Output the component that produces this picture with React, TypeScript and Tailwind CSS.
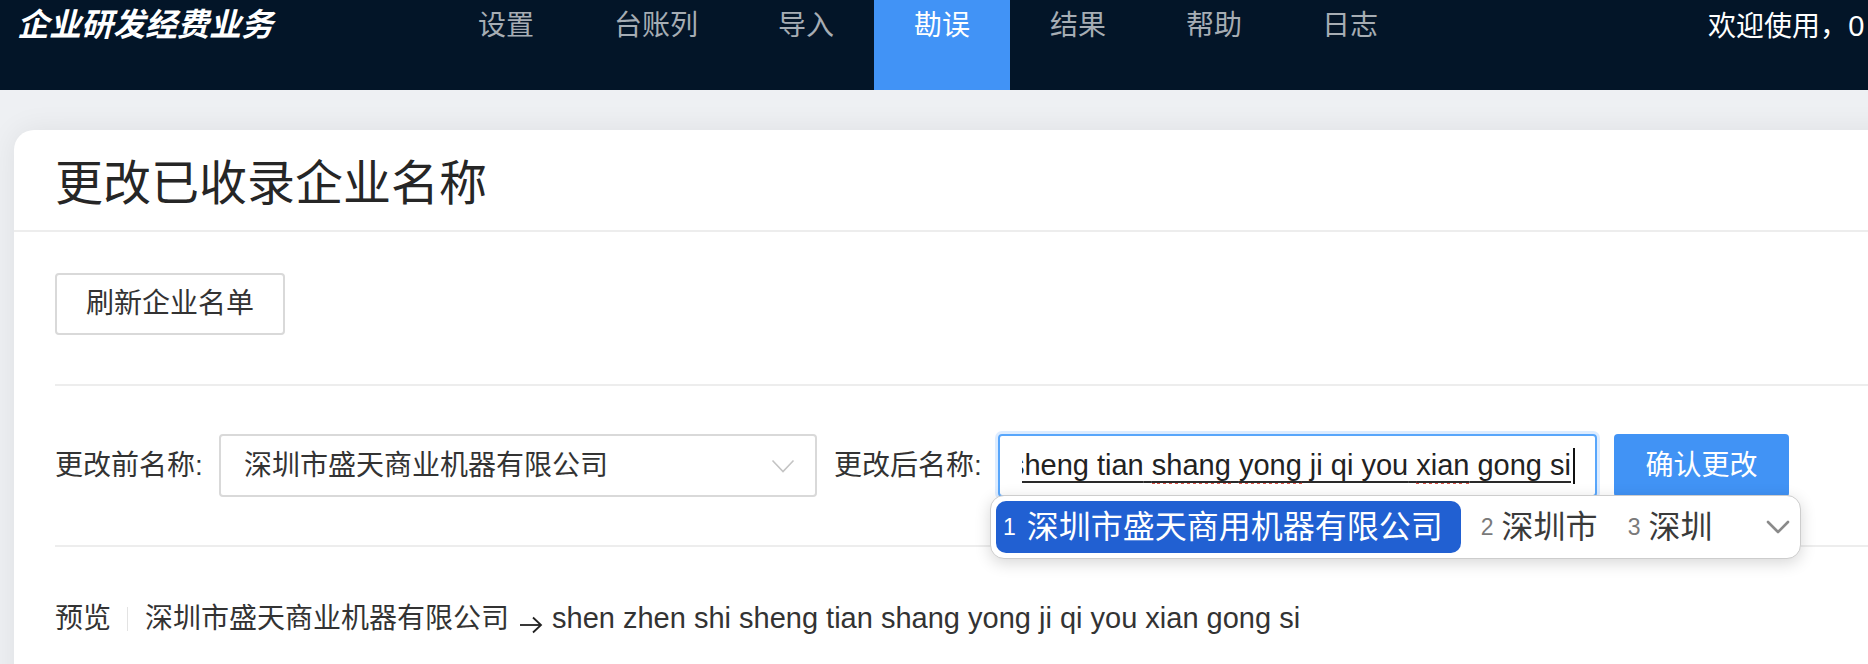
import React from "react";

const menu = ["设置", "台账列", "导入", "勘误", "结果", "帮助", "日志"];

export default function App() {
  return (
    <div className="w-[1868px] h-[664px] overflow-hidden bg-[#eef0f3] text-[#262626] font-['Liberation_Sans','Noto_Sans_CJK_SC',sans-serif]">
      <header className="h-[90px] bg-[#031528] flex items-start">
        <div className="w-[438px] shrink-0 pl-[17px] leading-[50px] text-[32px] font-bold italic text-white whitespace-nowrap">
          企业研发经费业务
        </div>
        <nav className="flex shrink-0">
          {menu.map((m) => (
            <div
              key={m}
              className={
                m === "勘误"
                  ? "h-[90px] px-10 text-[28px] leading-[52px] bg-[#4193f6] text-white whitespace-nowrap"
                  : "h-[90px] px-10 text-[28px] leading-[52px] text-[#a6adb4] whitespace-nowrap"
              }
            >
              {m}
            </div>
          ))}
        </nav>
        <div className="ml-[290px] shrink-0 whitespace-nowrap text-white text-[28px] leading-[52px]">
          欢迎使用，<span className="text-[29px]">0</span>
        </div>
      </header>

      <main className="pt-[40px] pl-[14px]">
        <div className="w-[1900px] h-[600px] bg-white rounded-tl-[20px] shadow-[0_0_30px_rgba(0,0,0,0.07)]">
          <div className="h-[102px] pl-[41px] pt-[8px] border-b-2 border-[#ededed] flex items-center text-[48px] text-[#262626]">
            更改已收录企业名称
          </div>

          <div className="px-[41px]">
            <div className="mt-[41px]">
              <button className="w-[230px] h-[62px] border-2 border-[#d9d9d9] rounded-[4px] bg-white text-[28px] text-[#333] flex items-center justify-center">
                刷新企业名单
              </button>
            </div>

            <div className="mt-[49px] h-[2px] bg-[#ededed]" />

            <div className="mt-[48px] h-[63px] flex items-center text-[28px] text-[#333]">
              <div className="w-[164px] shrink-0 whitespace-nowrap">更改前名称:</div>
              <div className="w-[598px] h-[63px] shrink-0 border-2 border-[#d9d9d9] rounded-[4px] flex items-center justify-between pl-[23px] pr-[20px]">
                <span className="whitespace-nowrap text-[#333]">深圳市盛天商业机器有限公司</span>
                <svg width="24" height="14" viewBox="0 0 24 14" fill="none">
                  <polyline points="1.5,1.5 12,12.5 22.5,1.5" stroke="#c4c4c4" strokeWidth="1.6" />
                </svg>
              </div>
              <div className="w-[181px] shrink-0 pl-[17px] whitespace-nowrap">更改后名称:</div>
              <div className="relative w-[599px] h-[63px] shrink-0">
                <div className="w-full h-full border-2 border-[#58a6fb] rounded-[4px] shadow-[0_0_0_3px_rgba(64,150,255,0.18)] flex items-center pl-[22px] pr-[20px]">
                  <div className="flex-1 min-w-0 h-[48px] overflow-hidden flex items-center justify-end">
                    <span className="shrink-0 whitespace-nowrap text-[29px] text-[#222] underline decoration-2 decoration-[#2a2a2a] underline-offset-[6px]">
                      sheng tian{" "}
                      <span className="border-b-[3px] border-dotted border-[#e0554a]">shang</span>{" "}
                      <span className="border-b-[3px] border-dotted border-[#e0554a]">yong</span> ji qi you{" "}
                      <span className="border-b-[3px] border-dotted border-[#e0554a]">xian</span> gong si
                    </span>
                    <span className="w-[2px] h-[36px] bg-[#111] ml-[2px] shrink-0" />
                  </div>
                </div>

                <div className="absolute left-[-8px] top-[61px] z-10 w-[811px] h-[64px] rounded-[14px] bg-white border border-[#cdcdcd] shadow-[0_4px_16px_rgba(0,0,0,0.16)] flex items-center px-[5px]">
                  <div className="h-[52px] rounded-[10px] bg-[#2160d2] flex items-center pl-[7px] pr-[18px] text-white">
                    <span className="text-[23px] mr-[11px]">1</span>
                    <span className="text-[32px] whitespace-nowrap">深圳市盛天商用机器有限公司</span>
                  </div>
                  <span className="ml-[20px] text-[23px] text-[#7a7a7a]">2</span>
                  <span className="ml-[8px] text-[32px] text-[#3a3a3a] whitespace-nowrap">深圳市</span>
                  <span className="ml-[30px] text-[23px] text-[#7a7a7a]">3</span>
                  <span className="ml-[8px] text-[32px] text-[#3a3a3a] whitespace-nowrap">深圳</span>
                  <svg className="ml-[54px]" width="24" height="14" viewBox="0 0 24 14" fill="none">
                    <polyline points="2,2 12,12 22,2" stroke="#8a8a8a" strokeWidth="2.6" strokeLinecap="round" strokeLinejoin="round" />
                  </svg>
                </div>
              </div>
              <button className="ml-[17px] w-[175px] h-[63px] shrink-0 rounded-[4px] bg-[#4193f5] text-white text-[28px] flex items-center justify-center">
                确认更改
              </button>
            </div>

            <div className="mt-[48px] h-[2px] bg-[#ededed]" />

            <div className="mt-[52px] h-[40px] flex items-center text-[28px] text-[#333]">
              <span className="whitespace-nowrap">预览</span>
              <span className="ml-[16px] mr-[17px] w-px h-[24px] bg-[#e3e3e3]" />
              <span className="whitespace-nowrap">深圳市盛天商业机器有限公司</span>
              <svg className="ml-[10px] mr-[9px] mt-[12px]" width="24" height="18" viewBox="0 0 24 18" fill="none">
                <line x1="1" y1="9" x2="22" y2="9" stroke="#222" strokeWidth="1.8" />
                <polyline points="14,1.5 22,9 14,16.5" stroke="#222" strokeWidth="1.8" fill="none" />
              </svg>
              <span className="whitespace-nowrap text-[29px]">shen zhen shi sheng tian shang yong ji qi you xian gong si</span>
            </div>
          </div>
        </div>
      </main>
    </div>
  );
}
